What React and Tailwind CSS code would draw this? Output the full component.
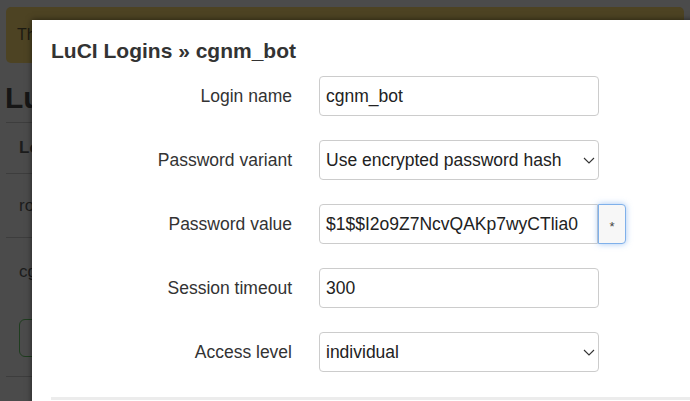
const font = { fontFamily: '"Liberation Sans", Arial, sans-serif' }

function Chevron() {
  return (
    <svg width="12" height="7" viewBox="0 0 12 7" className="shrink-0">
      <path d="M1 1l5 5 5-5" fill="none" stroke="#333" strokeWidth="1.1" />
    </svg>
  )
}

function Row({ label, children }) {
  return (
    <div className="flex items-center h-[40px]">
      <label className="w-[241px] text-right text-[17.5px] text-[#333]">{label}</label>
      <div className="ml-[27px] flex">{children}</div>
    </div>
  )
}

function TextInput({ value }) {
  return (
    <div className="w-[280px] h-[40px] border border-[#ccc] rounded-[4px] bg-white flex items-center px-[6px] text-[17.5px] text-[#222]">
      {value}
    </div>
  )
}

function Select({ value }) {
  return (
    <div className="w-[280px] h-[40px] border border-[#ccc] rounded-[4px] bg-white flex items-center justify-between pl-[6px] pr-[3px] text-[17.5px] text-[#222]">
      <span>{value}</span>
      <Chevron />
    </div>
  )
}

export default function App() {
  return (
    <div className="relative h-[401px] w-[690px] overflow-hidden bg-[#4b4b4b]" style={font}>
      {/* page behind the overlay */}
      <div className="pt-[7px] px-[6px]">
        <div className="h-[56px] rounded-[5px] bg-[#4d4323] flex items-center pl-[11px] text-[16px] text-[#1c1a12]">
          <span className="w-[15px] overflow-hidden whitespace-nowrap">There are no changes to apply.</span>
        </div>
        <h2 className="mt-[17px] -ml-[1px] text-[30px] font-bold leading-[36px] text-[#161616]">LuCI Logins</h2>
        <div className="mt-[6px] border-t border-[#3d3d3d]">
          <div className="h-[50px] flex items-center pl-[13px] text-[17px] font-bold text-[#1c1c1c]">Login</div>
          <div className="border-t border-[#3d3d3d] h-[64px] flex items-center pl-[13px] text-[17px] text-[#1c1c1c]">root</div>
          <div className="border-t border-[#3d3d3d] h-[139px] pl-[13px] pt-[21px] text-[17px] text-[#1c1c1c]">
            <div>cgnm_bot</div>
            <div className="mt-[34px] w-[60px] h-[38px] rounded-[6px] border border-[#1f3d1f]"></div>
          </div>
          <div className="border-t border-[#3d3d3d]"></div>
        </div>
      </div>

      {/* modal */}
      <div className="absolute left-[32px] top-[20px] w-[700px] h-[400px] bg-white shadow-[0_0_6px_rgba(0,0,0,0.55)] pl-[19px] pt-[19px]">
        <h4 className="text-[21px] font-bold leading-[24px] text-[#333]">LuCI Logins » cgnm_bot</h4>
        <div className="mt-[13px] flex flex-col gap-[24px]">
          <Row label="Login name">
            <TextInput value="cgnm_bot" />
          </Row>
          <Row label="Password variant">
            <Select value="Use encrypted password hash" />
          </Row>
          <Row label="Password value">
            <div className="flex">
              <div className="w-[279px] h-[40px] border border-[#ccc] rounded-l-[4px] bg-white flex items-center px-[6px] text-[17.5px] text-[#222] whitespace-nowrap overflow-hidden">
                $1$$I2o9Z7NcvQAKp7wyCTlia0
              </div>
              <div className="w-[28px] h-[40px] border border-[#7fb0ea] rounded-r-[4px] bg-[#f7f7f7] shadow-[0_0_6px_rgba(102,160,235,0.6)] flex items-center justify-center pt-[5px] text-[13px] text-[#444]">
                *
              </div>
            </div>
          </Row>
          <Row label="Session timeout">
            <TextInput value="300" />
          </Row>
          <Row label="Access level">
            <Select value="individual" />
          </Row>
        </div>
        <div className="mt-[25px] border-t-[3px] border-[#ececec]"></div>
      </div>
    </div>
  )
}
